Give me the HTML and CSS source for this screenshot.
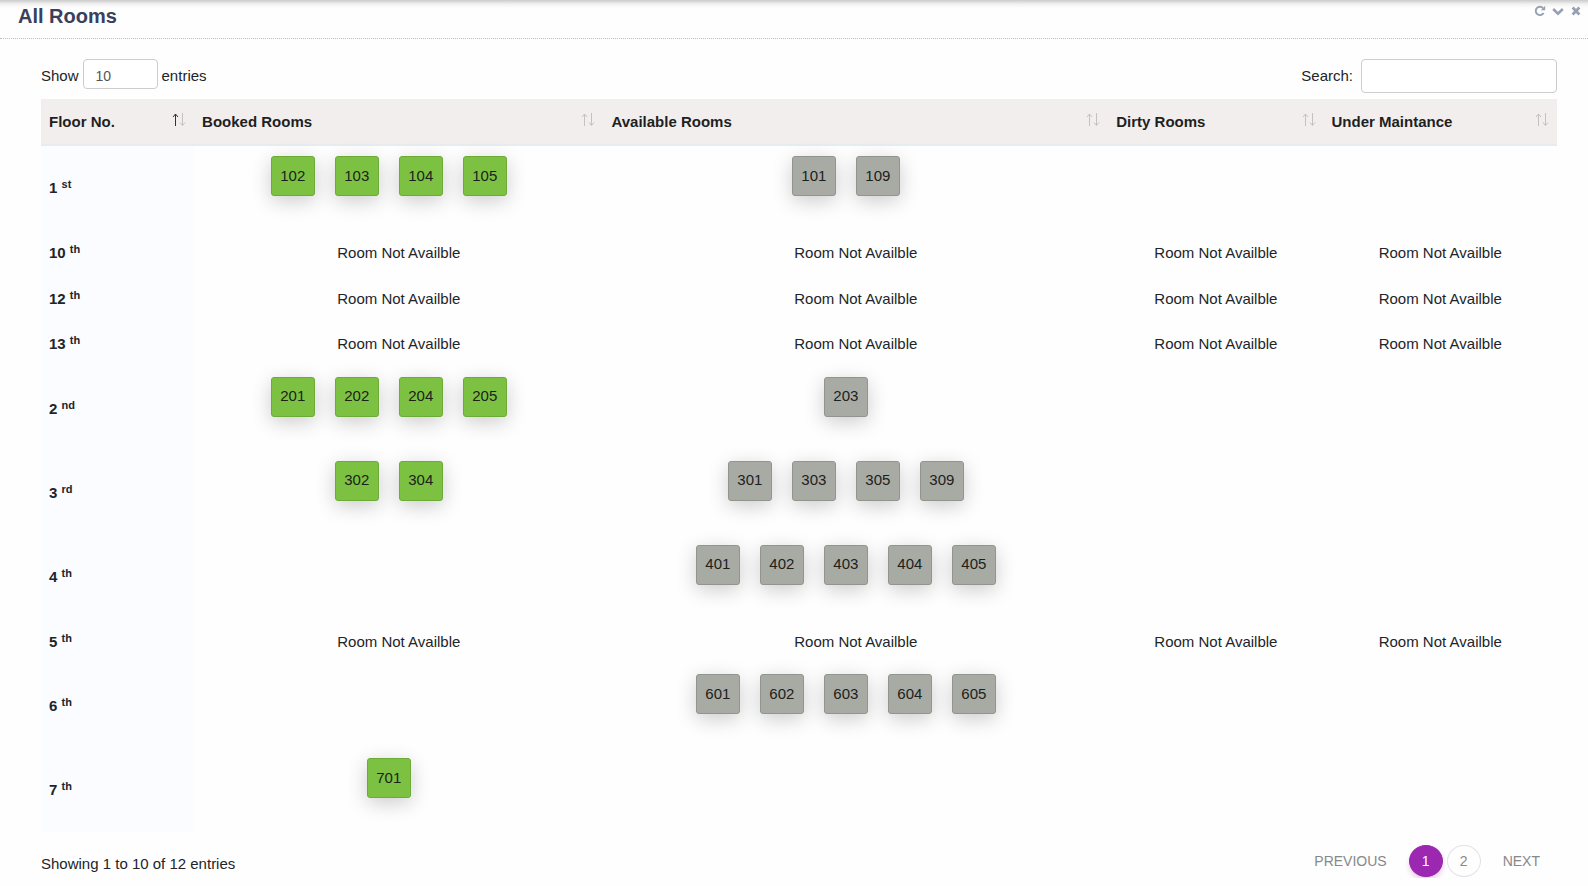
FILE: index.html
```html
<!DOCTYPE html>
<html lang="en">
<head>
<meta charset="utf-8">
<title>All Rooms</title>
<link rel="stylesheet" href="styles.css">
</head>
<body>
<main class="card">
  <header class="card-head">
    <h1 class="card-title">All Rooms</h1>
    <div class="tools">
      <button class="tool" type="button" aria-label="Refresh"><svg viewBox="0 0 12 12" width="12" height="12"><path d="M9.6 8A4.2 4.2 0 1 1 9 3" fill="none" stroke="currentColor" stroke-width="1.9"/><path d="M11.2 .8V5.2H6.8Z" fill="currentColor"/></svg></button>
      <button class="tool" type="button" aria-label="Collapse"><svg viewBox="0 0 12 12" width="12" height="12"><path d="M1.2 4L6 8.6L10.8 4" fill="none" stroke="currentColor" stroke-width="2.6"/></svg></button>
      <button class="tool" type="button" aria-label="Close"><svg viewBox="0 0 12 12" width="12" height="12"><path d="M2.6 2.6L9.4 9.400M9.4 2.6L2.6 9.400" fill="none" stroke="currentColor" stroke-width="2.8"/></svg></button>
    </div>
  </header>
  <div class="card-body">
    <div class="controls">
      <label class="control">Show
        <select class="field length"><option>10</option><option>25</option><option>50</option></select>
        entries</label>
      <label class="control search-control">Search: <input class="field search" type="search"></label>
    </div>
    <table class="rooms">
      <colgroup><col class="c-floor"><col class="c-booked"><col class="c-available"><col class="c-dirty"><col class="c-under"></colgroup>
      <thead>
        <tr>
          <th scope="col"><div class="th-inner">Floor No.<svg class="sort asc" viewBox="0 0 14 14" width="14" height="14"><path class="up" d="M3.5 13V1M1 4L3.5 1L6 4"/><path class="down" d="M10.5 0V12M8 9.500L10.5 12.500L13 9.500"/></svg></div></th>
          <th scope="col"><div class="th-inner">Booked Rooms<svg class="sort" viewBox="0 0 14 14" width="14" height="14"><path class="up" d="M3.5 13V1M1 4L3.5 1L6 4"/><path class="down" d="M10.5 0V12M8 9.500L10.5 12.500L13 9.500"/></svg></div></th>
          <th scope="col"><div class="th-inner">Available Rooms<svg class="sort" viewBox="0 0 14 14" width="14" height="14"><path class="up" d="M3.5 13V1M1 4L3.5 1L6 4"/><path class="down" d="M10.5 0V12M8 9.500L10.5 12.500L13 9.500"/></svg></div></th>
          <th scope="col"><div class="th-inner">Dirty Rooms<svg class="sort" viewBox="0 0 14 14" width="14" height="14"><path class="up" d="M3.5 13V1M1 4L3.5 1L6 4"/><path class="down" d="M10.5 0V12M8 9.500L10.5 12.500L13 9.500"/></svg></div></th>
          <th scope="col"><div class="th-inner">Under Maintance<svg class="sort" viewBox="0 0 14 14" width="14" height="14"><path class="up" d="M3.5 13V1M1 4L3.5 1L6 4"/><path class="down" d="M10.5 0V12M8 9.500L10.5 12.500L13 9.500"/></svg></div></th>
        </tr>
      </thead>
      <tbody>
        <tr><td class="floor">1 <sup>st</sup></td><td class="list"><div class="chips booked"><button type="button">102</button><button type="button">103</button><button type="button">104</button><button type="button">105</button></div></td><td class="list"><div class="chips available"><button type="button">101</button><button type="button">109</button></div></td><td></td><td></td></tr>
        <tr><td class="floor">10 <sup>th</sup></td><td>Room Not Availble</td><td>Room Not Availble</td><td>Room Not Availble</td><td>Room Not Availble</td></tr>
        <tr><td class="floor">12 <sup>th</sup></td><td>Room Not Availble</td><td>Room Not Availble</td><td>Room Not Availble</td><td>Room Not Availble</td></tr>
        <tr><td class="floor">13 <sup>th</sup></td><td>Room Not Availble</td><td>Room Not Availble</td><td>Room Not Availble</td><td>Room Not Availble</td></tr>
        <tr><td class="floor">2 <sup>nd</sup></td><td class="list"><div class="chips booked"><button type="button">201</button><button type="button">202</button><button type="button">204</button><button type="button">205</button></div></td><td class="list"><div class="chips available"><button type="button">203</button></div></td><td></td><td></td></tr>
        <tr><td class="floor">3 <sup>rd</sup></td><td class="list"><div class="chips booked"><button type="button">302</button><button type="button">304</button></div></td><td class="list"><div class="chips available"><button type="button">301</button><button type="button">303</button><button type="button">305</button><button type="button">309</button></div></td><td></td><td></td></tr>
        <tr><td class="floor">4 <sup>th</sup></td><td></td><td class="list"><div class="chips available"><button type="button">401</button><button type="button">402</button><button type="button">403</button><button type="button">404</button><button type="button">405</button></div></td><td></td><td></td></tr>
        <tr><td class="floor">5 <sup>th</sup></td><td>Room Not Availble</td><td>Room Not Availble</td><td>Room Not Availble</td><td>Room Not Availble</td></tr>
        <tr><td class="floor">6 <sup>th</sup></td><td></td><td class="list"><div class="chips available"><button type="button">601</button><button type="button">602</button><button type="button">603</button><button type="button">604</button><button type="button">605</button></div></td><td></td><td></td></tr>
        <tr><td class="floor">7 <sup>th</sup></td><td class="list"><div class="chips booked"><button type="button">701</button></div></td><td></td><td></td><td></td></tr>
      </tbody>
    </table>
    <div class="foot">
      <p class="info">Showing 1 to 10 of 12 entries</p>
      <nav class="pager" aria-label="Pages">
        <a class="step" href="#">PREVIOUS</a>
        <a class="page current" href="#" aria-current="page">1</a>
        <a class="page" href="#">2</a>
        <a class="step" href="#">NEXT</a>
      </nav>
    </div>
  </div>
</main>
</body>
</html>
```
FILE: styles.css
```css
* { box-sizing: border-box; }
body {
  margin: 0;
  background: #fefefe;
  color: #212529;
  font: 15px/1.5 "Liberation Sans", Arial, sans-serif;
}
.card-head {
  display: flex;
  justify-content: space-between;
  align-items: flex-start;
  height: 39px;
  padding: 4px 6px 0 18px;
  border-bottom: 1px dotted rgba(0, 0, 0, .25);
  background: linear-gradient(rgba(0, 0, 0, .2), rgba(0, 0, 0, .05) 4px, transparent 8px) no-repeat;
}
.card-title {
  margin: 0;
  color: #3a405b;
  font-size: 20px;
  line-height: 24px;
}
.tools { display: flex; gap: 6px; padding-top: 1px; }
.tool {
  display: flex;
  padding: 0;
  border: 0;
  background: none;
  color: #97a0b3;
}
.card-body { padding: 20px 31px 0 41px; }
.controls {
  display: flex;
  justify-content: space-between;
  align-items: flex-start;
  height: 40px;
}
.control { display: flex; align-items: center; gap: 4px; height: 34px; }
.search-control { gap: 8px; }
.field {
  border: 1px solid #ccc;
  border-radius: 4px;
  background: #fff;
  color: #555;
  font: 14px "Liberation Sans", Arial, sans-serif;
}
.length {
  appearance: none;
  align-self: flex-start;
  width: 75px;
  height: 30px;
  padding: 4px 12px 0;
}
.search { width: 196px; height: 34px; padding: 6px 12px; }

.rooms {
  width: 100%;
  border-collapse: separate;
  border-spacing: 0;
  table-layout: fixed;
}
.c-floor { width: 10.1%; }
.c-booked { width: 27%; }
.c-available { width: 33.3%; }
.c-dirty { width: 14.2%; }
.rooms th {
  height: 47px;
  padding: 2px 8px 0;
  border-bottom: 2px solid #e7ecf1;
  background: #f2eeee;
  color: #1f1f1f;
  text-align: left;
}
.th-inner { display: flex; justify-content: space-between; align-items: center; }
.sort {
  margin-bottom: 6px;
  fill: none;
  stroke: #c4c1c1;
  stroke-width: 1;
}
.asc .up { stroke: #333; }
.rooms td {
  padding: 12px 8px 10px;
  border-bottom: 1px solid transparent;
  text-align: center;
}
.rooms .floor {
  background: #fafcff;
  font-weight: 700;
  text-align: left;
}
.floor sup { font-size: 11px; line-height: 0; vertical-align: 5px; }
.rooms .list { padding-top: 10px; }
.chips { display: flex; flex-wrap: wrap; justify-content: center; }
.chips button {
  width: 44px;
  height: 40px;
  margin: 0 20px 23px 0;
  padding: 0;
  border: 1px solid;
  border-radius: 3px;
  box-shadow: 0 5px 20px rgba(0, 0, 0, .2);
  color: #1c211c;
  font: inherit;
}
.booked button { border-color: #6cab36; background: #7dc142; }
.available button { border-color: #92958f; background: #a8aba4; }

.foot { display: flex; justify-content: space-between; }
.info { margin: 0; padding-top: 21px; }
.pager {
  display: flex;
  align-items: center;
  gap: 4px;
  height: 34px;
  margin-top: 12px;
  padding-right: 17px;
}
.pager a { color: #888; font-size: 14px; text-decoration: none; }
.pager .step:first-child { margin-right: 18px; }
.pager .step:last-child { margin-left: 18px; }
.page {
  display: flex;
  justify-content: center;
  align-items: center;
  width: 34px;
  height: 32px;
  border: 1px solid #dee2e6;
  border-radius: 50%;
}
.pager .current {
  border-color: #9c27b0;
  background: #9c27b0;
  box-shadow: 0 4px 5px rgba(156, 39, 176, .2);
  color: #fff;
}
```
